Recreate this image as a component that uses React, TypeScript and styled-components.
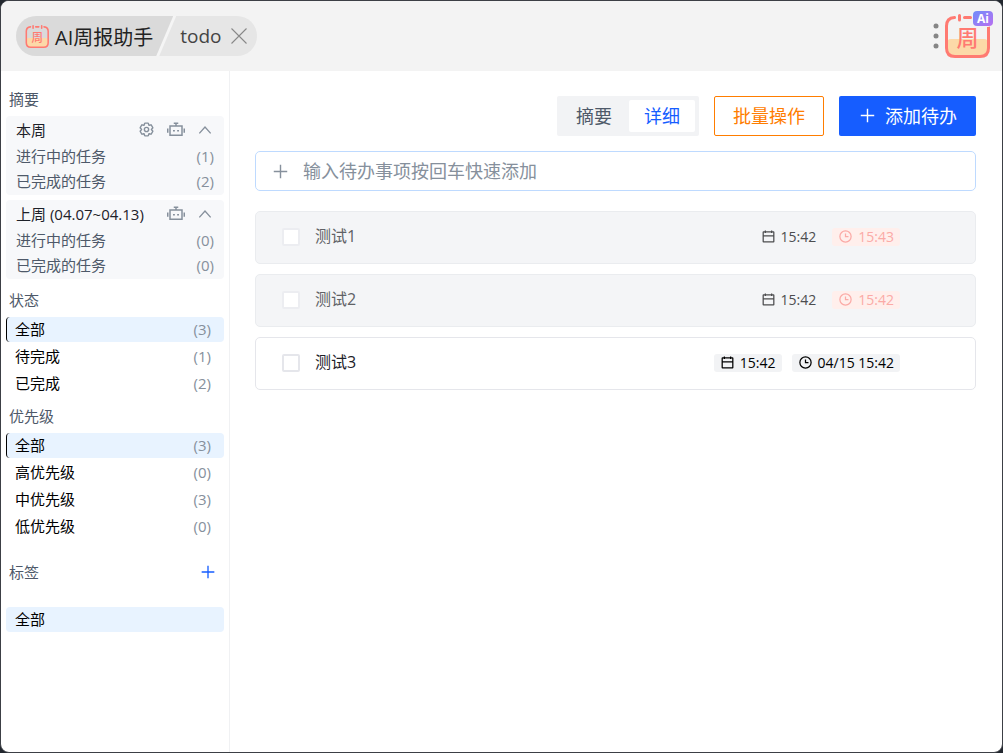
import React, { useState } from 'react';
import styled, { createGlobalStyle } from 'styled-components';

const GlobalStyle = createGlobalStyle`
  * { box-sizing: border-box; }
  body {
    margin: 0;
    background: #22272e;
    color: #1d2129;
    font-family: 'Open Sans', 'Noto Sans CJK SC', sans-serif;
    font-size: 15px;
  }
  button, input { font: inherit; }
  button { border: 0; padding: 0; background: none; color: inherit; cursor: pointer; }
`;

const AppWindow = styled.div`
  display: flex;
  flex-direction: column;
  min-height: 100vh;
  border: 1px solid #3c3f45;
  border-radius: 9px;
  overflow: hidden;
  background: #fff;
`;

const Header = styled.header`
  display: flex;
  align-items: center;
  justify-content: space-between;
  height: 70px;
  padding: 0 10px 0 15px;
  background: #f3f3f3;
`;

const Breadcrumb = styled.div`
  display: flex;
  height: 40px;
  border-radius: 20px;
  overflow: hidden;
  background: #e6e6e6;
`;

const slant = 'polygon(0 0, 100% 0, calc(100% - 17px) 100%, 0 100%)';

const SlashEdge = styled.div`
  padding-right: 3px;
  background: #f5f5f5;
  clip-path: ${slant};
`;

const AppTab = styled.div`
  display: flex;
  align-items: center;
  gap: 5px;
  height: 40px;
  padding: 0 20px 0 9px;
  background: #dadada;
  clip-path: ${slant};
  font-size: 20px;
  color: #222;
`;

const CommandTab = styled.div`
  display: flex;
  align-items: center;
  gap: 8px;
  padding: 0 9px 0 4px;
  font-size: 19px;
  color: #444;
`;

const HeaderTools = styled.div`
  display: flex;
  align-items: center;
  gap: 5px;
`;

const IconButton = styled.button<{ $color?: string }>`
  display: flex;
  color: ${(p) => p.$color ?? '#86909c'};
`;

const Body = styled.div`
  display: flex;
  flex: 1;
`;

const Sidebar = styled.aside`
  flex: 0 0 229px;
  padding: 17px 5px 20px;
  border-right: 1px solid #f0f1f3;
`;

const Section = styled.section<{ $gap: number }>`
  margin-bottom: ${(p) => p.$gap}px;
`;

const SectionHead = styled.div<{ $loose?: boolean }>`
  display: flex;
  align-items: center;
  justify-content: space-between;
  height: 24px;
  margin-bottom: ${(p) => (p.$loose ? 22 : 4)}px;
  padding: 0 8px 3px 3px;
`;

const SectionTitle = styled.h2`
  margin: 0;
  font-size: 15px;
  font-weight: 400;
  color: #4e5969;
`;

const WeekCard = styled.div`
  height: 79px;
  margin-bottom: 5px;
  padding: 0 10px;
  border-radius: 4px;
  background: #f7f8fa;
`;

const WeekHead = styled.div`
  display: flex;
  align-items: center;
  justify-content: space-between;
  height: 27px;
  color: #1d2129;
`;

const WeekActions = styled.div`
  display: flex;
  align-items: center;
  gap: 12px;
  padding-right: 1px;
`;

const WeekRow = styled.div`
  display: flex;
  align-items: center;
  justify-content: space-between;
  height: 25px;
  color: #4e5969;
`;

const Count = styled.span`
  color: #86909c;
`;

const FilterList = styled.div`
  display: flex;
  flex-direction: column;
  gap: 2px;
`;

const FilterItem = styled.button<{ $active?: boolean; $marked?: boolean }>`
  display: flex;
  align-items: center;
  justify-content: space-between;
  height: 25px;
  padding: 0 13px 2px 8px;
  border-left: 1px solid ${(p) => (p.$marked ? '#000' : 'transparent')};
  border-radius: 4px;
  background: ${(p) => (p.$active ? '#e8f3ff' : 'transparent')};
  color: #000;
`;

const Main = styled.main`
  flex: 1;
  min-width: 0;
  padding: 25px 26px 25px 25px;
`;

const Toolbar = styled.div`
  display: flex;
  justify-content: flex-end;
  gap: 15px;
  font-size: 18px;
`;

const Segmented = styled.div`
  display: flex;
  gap: 2px;
  height: 40px;
  padding: 4px;
  border-radius: 2px;
  background: #f2f3f5;
`;

const SegmentButton = styled.button<{ $active?: boolean }>`
  padding: 0 15px 2px;
  border-radius: 2px;
  background: ${(p) => (p.$active ? '#fff' : 'transparent')};
  color: ${(p) => (p.$active ? '#165dff' : '#4e5969')};
`;

const OutlineButton = styled.button`
  height: 40px;
  padding: 0 18px 2px;
  border: 1px solid #ff7d00;
  border-radius: 2px;
  color: #ff7d00;
`;

const PrimaryButton = styled.button`
  display: flex;
  align-items: center;
  gap: 9px;
  height: 40px;
  padding: 0 19px 2px 20px;
  border-radius: 2px;
  background: #165dff;
  color: #fff;
`;

const QuickAdd = styled.label`
  display: flex;
  align-items: center;
  gap: 14px;
  height: 40px;
  margin: 15px 0 20px;
  padding: 0 16px;
  border: 1px solid #bedaff;
  border-radius: 5px;
  color: #86909c;
`;

const QuickInput = styled.input`
  flex: 1;
  min-width: 0;
  padding: 0;
  border: 0;
  outline: 0;
  background: none;
  font-size: 18px;
  color: #1d2129;
  &::placeholder { color: #86909c; opacity: 1; }
`;

const TodoList = styled.ul`
  display: flex;
  flex-direction: column;
  gap: 10px;
  margin: 0;
  padding: 0;
  list-style: none;
`;

const TodoRow = styled.li<{ $done: boolean }>`
  display: flex;
  align-items: center;
  height: 53px;
  padding: 0 75px 2px 26px;
  border: 1px solid ${(p) => (p.$done ? '#eaecef' : '#e5e6eb')};
  border-radius: 5px;
  background: ${(p) => (p.$done ? '#f4f5f7' : '#fff')};
`;

const Checkbox = styled.input<{ $done: boolean }>`
  appearance: none;
  width: 18px;
  height: 18px;
  margin: 0 15px 0 0;
  border: 2px solid ${(p) => (p.$done ? '#ecedf1' : '#e5e6eb')};
  border-radius: 2px;
  background: #fff;
`;

const TodoName = styled.label<{ $done: boolean }>`
  flex: 1;
  padding-bottom: 3px;
  font-size: 16px;
  color: ${(p) => (p.$done ? '#606266' : '#1d2129')};
`;

const Tags = styled.div`
  display: flex;
  gap: 10px;
`;

const tagTones = {
  plain: { bg: 'transparent', fg: '#4c4d4f' },
  late: { bg: '#ffefec', fg: '#fbaaa6' },
  open: { bg: '#f2f3f5', fg: '#000' },
};

const Tag = styled.span<{ $tone: keyof typeof tagTones }>`
  display: flex;
  align-items: center;
  gap: 5px;
  height: 18px;
  padding: 0 6px;
  border-radius: 3px;
  background: ${(p) => tagTones[p.$tone].bg};
  color: ${(p) => tagTones[p.$tone].fg};
  font-size: 14px;
`;

const LogoSvg = styled.svg`
  overflow: visible;
`;

const paths = {
  plus: 'M5 24h38M24 5v38',
  close: 'M4 4l40 40M44 4 4 44',
  up: 'M41 34 24 15 7 34',
  calendar:
    'M7 22h34M14 5v8m20-8v8M8 41h32a1 1 0 0 0 1-1V10a1 1 0 0 0-1-1H8a1 1 0 0 0-1 1v30a1 1 0 0 0 1 1Z',
  clock: 'M24 14v10h9.5m8.5 0c0 9.941-8.059 18-18 18S6 33.941 6 24 14.059 6 24 6s18 8.059 18 18Z',
  robot: 'M8 13h32v25H8zM24 13V6M18 6h12M2 20v11M46 20v11M16 26h5M27 26h5',
  settings:
    'M18.797 6.732A1 1 0 0 1 19.76 6h8.48a1 1 0 0 1 .964.732l1.285 4.628a1 1 0 0 0 1.213.7l4.651-1.2a1 1 0 0 1 1.116.468l4.24 7.344a1 1 0 0 1-.153 1.2L38.193 23.3a1 1 0 0 0 0 1.402l3.364 3.427a1 1 0 0 1 .153 1.2l-4.24 7.344a1 1 0 0 1-1.116.468l-4.65-1.2a1 1 0 0 0-1.214.7l-1.285 4.628a1 1 0 0 1-.964.732h-8.48a1 1 0 0 1-.963-.732L17.51 36.64a1 1 0 0 0-1.213-.7l-4.65 1.2a1 1 0 0 1-1.116-.468l-4.24-7.344a1 1 0 0 1 .153-1.2L9.809 24.7a1 1 0 0 0 0-1.402l-3.364-3.427a1 1 0 0 1-.153-1.2l4.24-7.344a1 1 0 0 1 1.116-.468l4.65 1.2a1 1 0 0 0 1.213-.7l1.286-4.628ZM30 24a6 6 0 1 1-12 0 6 6 0 0 1 12 0Z',
};

function Icon({ name, size, stroke = 4 }: { name: keyof typeof paths; size: number; stroke?: number }) {
  return (
    <svg width={size} height={size} viewBox="0 0 48 48" fill="none" stroke="currentColor" strokeWidth={stroke} aria-hidden="true">
      <path d={paths[name]} />
    </svg>
  );
}

function Logo({ size, badge }: { size: number; badge?: boolean }) {
  return (
    <LogoSvg width={size} height={size} viewBox="0 0 48 48" aria-hidden="true">
      <defs>
        <linearGradient id="badge" x1="0" y1="0" x2="1" y2="1">
          <stop offset="0" stopColor="#6f8dfb" />
          <stop offset="1" stopColor="#b86ff0" />
        </linearGradient>
      </defs>
      <path d="M3 31q0-4 4-4h33q4 0 4 4v6q0 8-8 8H11q-8 0-8-8z" fill="#fcd9a8" />
      <path
        d="M10.500 5.500Q2.500 6 2.500 14v22q0 8.500 8.500 8.500h25q8.500 0 8.500-8.500V14q0-8-8-8.500M15.500 3.500v4.500M20.500 5.500h6M32 3.500v4.500"
        fill="none"
        stroke="#ff7a72"
        strokeWidth="3"
        strokeLinecap="round"
      />
      <text x="23.500" y="34" textAnchor="middle" fontFamily="'Noto Sans CJK SC', sans-serif" fontSize="22" fontWeight="500" fill="#ff7a72">
        周
      </text>
      {badge && (
        <>
          <rect x="28" y="-2" width="21" height="17" rx="5" fill="#f3f3f3" />
          <rect x="29" y="-1" width="20" height="15" rx="4" fill="url(#badge)" />
          <text x="39" y="11" textAnchor="middle" fontFamily="'Open Sans', sans-serif" fontSize="12" fontWeight="700" fill="#fff">
            Ai
          </text>
        </>
      )}
    </LogoSvg>
  );
}

const weeks = [
  { name: '本周', settings: true, doing: 1, done: 2 },
  { name: '上周 (04.07~04.13)', settings: false, doing: 0, done: 0 },
];

const filters = [
  { title: '状态', gap: 9, items: [['全部', 3], ['待完成', 1], ['已完成', 2]] as [string, number][] },
  { title: '优先级', gap: 22, items: [['全部', 3], ['高优先级', 0], ['中优先级', 3], ['低优先级', 0]] as [string, number][] },
];

const todos = [
  { id: 't1', name: '测试1', done: true, start: '15:42', due: '15:43' },
  { id: 't2', name: '测试2', done: true, start: '15:42', due: '15:42' },
  { id: 't3', name: '测试3', done: false, start: '15:42', due: '04/15 15:42' },
];

export default function App() {
  const [text, setText] = useState('');
  return (
    <>
      <GlobalStyle />
      <AppWindow>
        <Header>
          <Breadcrumb>
            <SlashEdge>
              <AppTab>
                <Logo size={25} />
                AI周报助手
              </AppTab>
            </SlashEdge>
            <CommandTab>
              todo
              <IconButton $color="#888" aria-label="关闭">
                <Icon name="close" size={18} stroke={3} />
              </IconButton>
            </CommandTab>
          </Breadcrumb>
          <HeaderTools>
            <IconButton $color="#858585" aria-label="更多">
              <svg width="6" height="26" viewBox="0 0 6 26" fill="currentColor" aria-hidden="true">
                <circle cx="3" cy="3" r="2.500" />
                <circle cx="3" cy="13" r="2.500" />
                <circle cx="3" cy="23" r="2.500" />
              </svg>
            </IconButton>
            <Logo size={48} badge />
          </HeaderTools>
        </Header>
        <Body>
          <Sidebar>
            <Section $gap={10}>
              <SectionHead>
                <SectionTitle>摘要</SectionTitle>
              </SectionHead>
              {weeks.map((w) => (
                <WeekCard key={w.name}>
                  <WeekHead>
                    {w.name}
                    <WeekActions>
                      {w.settings && (
                        <IconButton aria-label="设置">
                          <Icon name="settings" size={17} />
                        </IconButton>
                      )}
                      <IconButton aria-label="智能总结">
                        <Icon name="robot" size={18} />
                      </IconButton>
                      <IconButton aria-label="收起">
                        <Icon name="up" size={16} />
                      </IconButton>
                    </WeekActions>
                  </WeekHead>
                  <WeekRow>
                    进行中的任务<Count>({w.doing})</Count>
                  </WeekRow>
                  <WeekRow>
                    已完成的任务<Count>({w.done})</Count>
                  </WeekRow>
                </WeekCard>
              ))}
            </Section>
            {filters.map((f) => (
              <Section key={f.title} $gap={f.gap}>
                <SectionHead>
                  <SectionTitle>{f.title}</SectionTitle>
                </SectionHead>
                <FilterList>
                  {f.items.map(([name, n], i) => (
                    <FilterItem key={name} $active={i === 0} $marked={i === 0}>
                      {name}
                      <Count>({n})</Count>
                    </FilterItem>
                  ))}
                </FilterList>
              </Section>
            ))}
            <Section $gap={0}>
              <SectionHead $loose>
                <SectionTitle>标签</SectionTitle>
                <IconButton $color="#165dff" aria-label="添加标签">
                  <Icon name="plus" size={16} />
                </IconButton>
              </SectionHead>
              <FilterList>
                <FilterItem $active>全部</FilterItem>
              </FilterList>
            </Section>
          </Sidebar>
          <Main>
            <Toolbar>
              <Segmented>
                <SegmentButton>摘要</SegmentButton>
                <SegmentButton $active>详细</SegmentButton>
              </Segmented>
              <OutlineButton>批量操作</OutlineButton>
              <PrimaryButton>
                <Icon name="plus" size={17} />
                添加待办
              </PrimaryButton>
            </Toolbar>
            <QuickAdd>
              <Icon name="plus" size={17} />
              <QuickInput
                aria-label="快速添加待办"
                placeholder="输入待办事项按回车快速添加"
                value={text}
                onChange={(e) => setText(e.target.value)}
              />
            </QuickAdd>
            <TodoList>
              {todos.map((t) => (
                <TodoRow key={t.id} $done={t.done}>
                  <Checkbox type="checkbox" id={t.id} $done={t.done} />
                  <TodoName htmlFor={t.id} $done={t.done}>
                    {t.name}
                  </TodoName>
                  <Tags>
                    <Tag $tone={t.done ? 'plain' : 'open'}>
                      <Icon name="calendar" size={15} />
                      {t.start}
                    </Tag>
                    <Tag $tone={t.done ? 'late' : 'open'}>
                      <Icon name="clock" size={15} />
                      {t.due}
                    </Tag>
                  </Tags>
                </TodoRow>
              ))}
            </TodoList>
          </Main>
        </Body>
      </AppWindow>
    </>
  );
}
